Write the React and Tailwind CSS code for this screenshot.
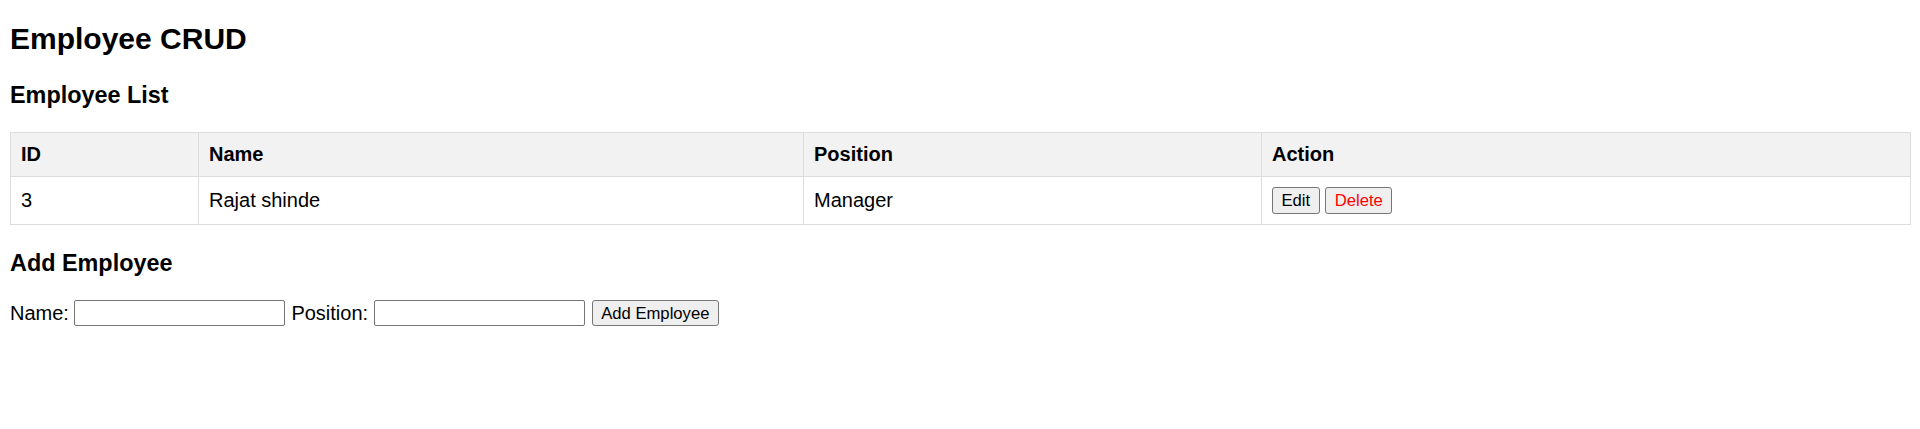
import React from "react";

export default function App() {
  return (
    <div className="min-h-[429px] bg-white px-[10px] text-black font-['Liberation_Sans',Arial,sans-serif]">
      <div className="pt-[22px] text-[30px] leading-[34px] font-bold">Employee CRUD</div>
      <div className="mt-[26px] text-[23.4px] leading-[26px] font-bold">Employee List</div>

      <table className="mt-[24px] w-[1900px] table-fixed border-collapse text-[20px] leading-[23px]">
        <colgroup>
          <col className="w-[188px]" />
          <col className="w-[605px]" />
          <col className="w-[458px]" />
          <col className="w-[649px]" />
        </colgroup>
        <thead>
          <tr className="bg-[#f2f2f2]">
            <th className="border border-[#dddddd] p-[10px] text-left font-bold">ID</th>
            <th className="border border-[#dddddd] p-[10px] text-left font-bold">Name</th>
            <th className="border border-[#dddddd] p-[10px] text-left font-bold">Position</th>
            <th className="border border-[#dddddd] p-[10px] text-left font-bold">Action</th>
          </tr>
        </thead>
        <tbody>
          <tr>
            <td className="border border-[#dddddd] p-[10px]">3</td>
            <td className="border border-[#dddddd] p-[10px]">Rajat shinde</td>
            <td className="border border-[#dddddd] p-[10px]">Manager</td>
            <td className="border border-[#dddddd] p-[10px]">
              <div className="flex h-[27px] items-center gap-[5.5px]">
                <button className="h-[27px] rounded-[3px] border border-[#767676] bg-[#efefef] px-[8.5px] text-[16.67px] leading-[19px] text-black">
                  Edit
                </button>
                <button className="h-[27px] rounded-[3px] border border-[#767676] bg-[#efefef] px-[8.5px] text-[16.67px] leading-[19px] text-[#ff0000]">
                  Delete
                </button>
              </div>
            </td>
          </tr>
        </tbody>
      </table>

      <div className="mt-[25px] text-[23.4px] leading-[26px] font-bold">Add Employee</div>

      <div className="mt-[24px] flex items-center text-[20px] leading-[23px]">
        <span>Name:</span>
        <input
          type="text"
          className="ml-[5.5px] h-[26px] w-[211px] rounded-[2px] border border-[#767676] bg-white px-[3px] outline-none"
        />
        <span className="ml-[6px]">Position:</span>
        <input
          type="text"
          className="ml-[6px] h-[26px] w-[211px] rounded-[2px] border border-[#767676] bg-white px-[3px] outline-none"
        />
        <button className="ml-[6.5px] h-[26px] rounded-[3px] border border-[#767676] bg-[#efefef] px-[8.5px] text-[16.67px] leading-[19px] text-black">
          Add Employee
        </button>
      </div>
    </div>
  );
}
